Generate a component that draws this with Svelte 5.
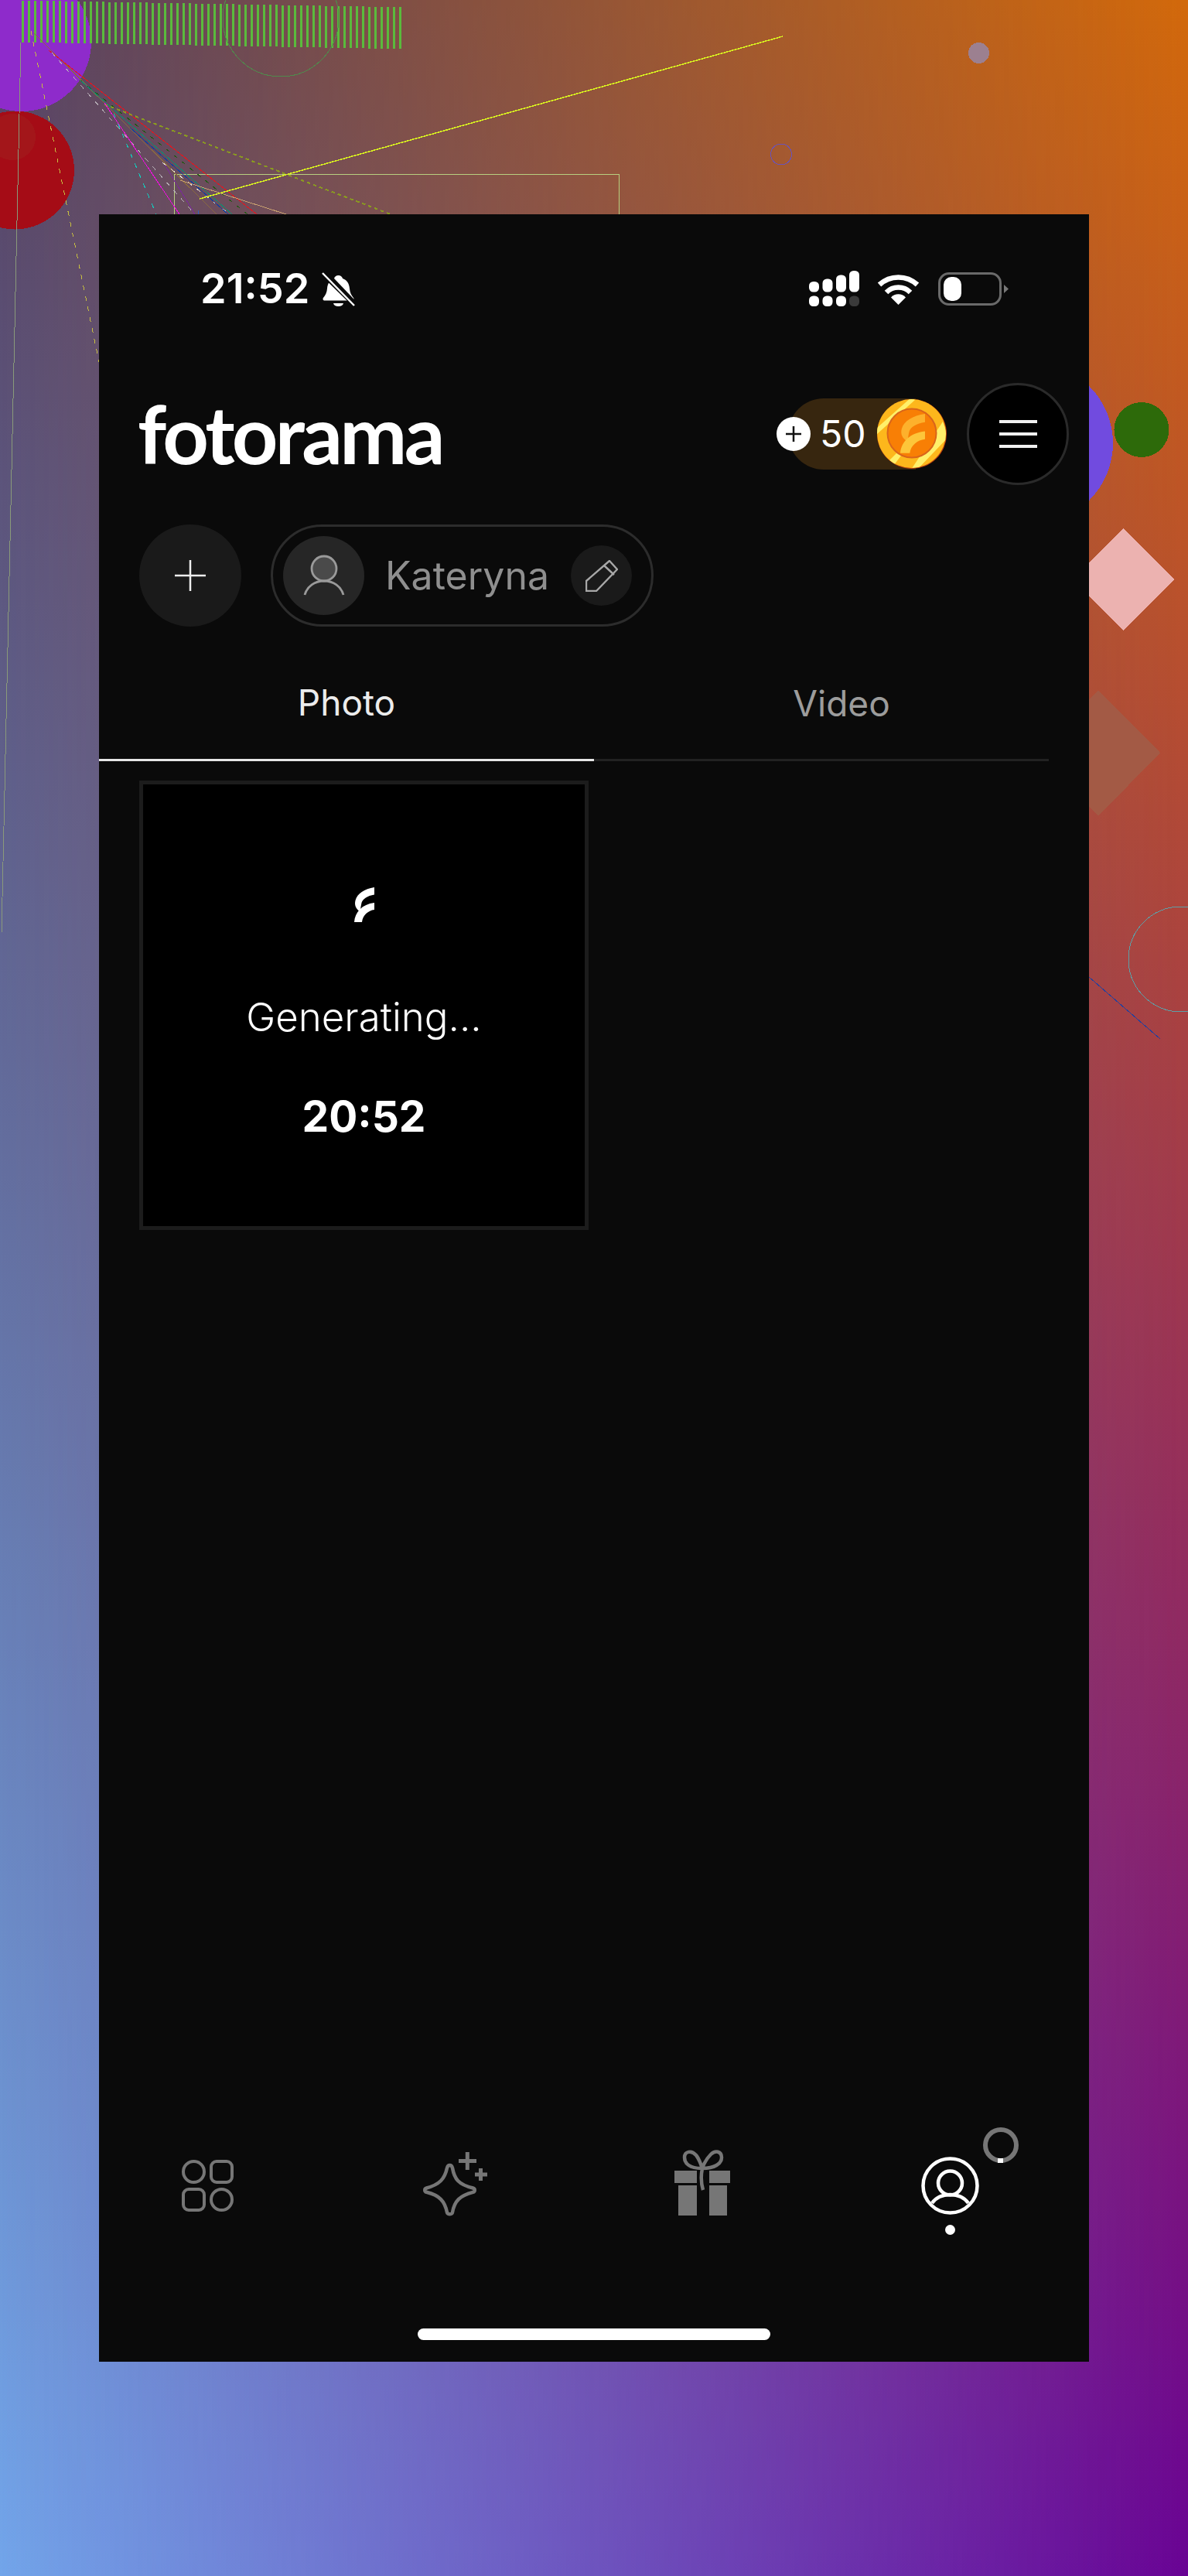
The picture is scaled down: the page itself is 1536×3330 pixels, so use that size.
<script lang="ts">
  // generative wallpaper behind the phone frame, in page pixels
  const bars = Array.from({ length: 62 }, (_, i) => ({
    x: 28 + i * 8,
    y: 1 + Math.floor(i / 7),
  }));

  const lines = [
    { x1: 43, y1: 42, x2: 280, y2: 277, c: "#8a6a40", w: 1 },
    { x1: 63, y1: 65, x2: 332, y2: 277, c: "#e8141c", w: 1 },
    { x1: 67, y1: 68, x2: 252, y2: 277, c: "#b8b0b8", w: 1, d: "6 8" },
    { x1: 210, y1: 210, x2: 297, y2: 277, c: "#e8e4d8", w: 1, d: "6 8" },
    { x1: 103, y1: 103, x2: 320, y2: 277, c: "#1c5a10", w: 1, d: "6 7" },
    { x1: 103, y1: 103, x2: 300, y2: 277, c: "#108a70", w: 1 },
    { x1: 168, y1: 165, x2: 295, y2: 277, c: "#1040a0", w: 1 },
    { x1: 135, y1: 135, x2: 505, y2: 277, c: "#8a9a20", w: 2, d: "4.500 4" },
    { x1: 135, y1: 133, x2: 232, y2: 277, c: "#f010e0", w: 1 },
    { x1: 147, y1: 147, x2: 202, y2: 277, c: "#10d0c0", w: 1, d: "6 8" },
    { x1: 213, y1: 213, x2: 252, y2: 277, c: "#7a2a9a", w: 1 },
    { x1: 40, y1: 40, x2: 128, y2: 468, c: "#c8c040", w: 1, d: "6 8" },
    { x1: 233, y1: 233, x2: 370, y2: 277, c: "#c8a070", w: 1 },
    { x1: 258, y1: 257, x2: 1012, y2: 47, c: "#d8f020", w: 1.5 },
    { x1: 256, y1: 272, x2: 256, y2: 277, c: "#3060c0", w: 1 },
    { x1: 27, y1: 55, x2: 2, y2: 1206, c: "#8a9a7a", w: 1 },
    { x1: 1408, y1: 1263, x2: 1500, y2: 1343, c: "#2040a0", w: 1 },
  ];
</script>

<div class="page">
  <div class="tint"></div>
  <svg class="wallpaper" viewBox="0 0 1536 3330" width="1536" height="3330" aria-hidden="true">
    <circle cx="28" cy="54" r="90" fill="#8e2bcb" />
    <circle cx="19.500" cy="220" r="76.500" fill="#a50c16" />
    <circle cx="16" cy="177" r="30" fill="#a3161a" />
    {#each bars as b}
      <rect x={b.x} y={b.y} width="3" height="54" fill="#5abb3c" />
    {/each}
    <circle cx="363" cy="24" r="75" fill="none" stroke="#4f8a4c" />
    <circle cx="1010" cy="199.500" r="13.500" fill="none" stroke="#6a52b8" />
    <circle cx="1265.500" cy="68.500" r="13.500" fill="#9c8090" />
    <rect x="225.500" y="225.500" width="574.500" height="60" fill="none" stroke="#b8d080" />
    {#each lines as l}
      <line
        x1={l.x1}
        y1={l.y1}
        x2={l.x2}
        y2={l.y2}
        stroke={l.c}
        stroke-width={l.w}
        stroke-dasharray={l.d}
      />
    {/each}
    <circle cx="1335" cy="573" r="104" fill="#714bdf" />
    <circle cx="1476" cy="555.500" r="35.500" fill="#2d6a0a" />
    <polygon points="1452,683 1518,749 1452,815 1386,749" fill="#ecb2b0" />
    <polygon points="1420,892 1500,973 1420,1055 1340,973" fill="#a35a45" />
    <circle cx="1527" cy="1240" r="68" fill="none" stroke="#5ca0a8" />
  </svg>

  <main class="phone">
    <div class="status">
      <div class="status-left">
        <span class="clock">21:52</span>
        <svg class="bell" viewBox="0 0 43 45" aria-hidden="true">
          <path d="M21.500 0c3 0 5 2 5.500 4 6 2 8.500 7 9 13 .4 5 2 8 5 12 1 1.500.5 3.500-2 3.500H4c-2.500 0-3-2-2-3.500 3-4 4.600-7 5-12 .5-6 3-11 9-13 .5-2 2.500-4 5.500-4z" fill="#fff" transform="translate(0 5)" />
          <path d="M15 41h13c-.5 2.500-3 4-6.500 4s-6-1.500-6.500-4z" fill="#fff" />
          <path d="M4 0l39 41" stroke="#0a0a0a" stroke-width="5" />
          <path d="M0 3l42 41" stroke="#0a0a0a" stroke-width="4" />
          <path d="M1 2l41 42" stroke="#fff" stroke-width="2.500" />
        </svg>
      </div>
      <div class="status-right">
        <svg class="signal" viewBox="0 0 65 46" aria-hidden="true">
          <rect x="0" y="14" width="13" height="13.500" rx="5.500" fill="#fff" />
          <rect x="17.500" y="10.500" width="13" height="17" rx="5.500" fill="#fff" />
          <rect x="35" y="5.500" width="13" height="22" rx="5.500" fill="#fff" />
          <rect x="52" y="0" width="13" height="27.500" rx="5.500" fill="#fff" />
          <rect x="0" y="32.500" width="13" height="13.500" rx="5.500" fill="#fff" />
          <rect x="17.500" y="32.500" width="13" height="13.500" rx="5.500" fill="#fff" />
          <rect x="35" y="32.500" width="13" height="13.500" rx="5.500" fill="#fff" />
          <rect x="52" y="32.500" width="13" height="13.500" rx="5.500" fill="#3a3a3a" />
        </svg>
        <svg class="wifi" viewBox="0 0 55 41" aria-hidden="true">
          <path d="M3 15a36 36 0 0 1 49 0" fill="none" stroke="#fff" stroke-width="6.500" />
          <path d="M12 25a22 22 0 0 1 31 0" fill="none" stroke="#fff" stroke-width="6.500" />
          <path d="M27.500 41L18 31.500a13 13 0 0 1 19 0z" fill="#fff" />
        </svg>
        <div class="battery"><span class="level"></span></div>
        <svg class="nub" viewBox="0 0 6 11" aria-hidden="true">
          <path d="M0 0l6 5.500L0 11z" fill="#777" />
        </svg>
      </div>
    </div>

    <header class="top">
      <span class="logo">fotorama</span>
      <div class="top-actions">
        <div class="credits">
          <span class="add-credit">
            <svg viewBox="0 0 24 24" width="24" height="24" aria-hidden="true">
              <path d="M12 2v20M2 12h20" stroke="#111" stroke-width="2.500" />
            </svg>
          </span>
          <span class="amount">50</span>
          <svg class="coin" viewBox="0 0 90 92" aria-hidden="true">
            <defs>
              <clipPath id="coin-edge"><circle cx="44.500" cy="45.500" r="44.500" /></clipPath>
            </defs>
            <circle cx="45" cy="46" r="45" fill="#b8400f" />
            <circle cx="44.500" cy="45.500" r="44.500" fill="#fdb71c" />
            <g clip-path="url(#coin-edge)" fill="#fff06a">
              <polygon points="0,38 45,-2 49,2 0,46" />
              <polygon points="85,30 92,50 52,92 44,92" />
              <polygon points="16,80 30,66 34,70 22,86" />
            </g>
            <circle cx="45" cy="45" r="31.500" fill="#f87f05" stroke="#d9651b" stroke-width="2" />
            <g transform="translate(30 20) scale(1.230 1.130)">
              <path d="M8 32C2 28 0 23 1.500 17 4 8 13 2 26 0v9.500C17 11 11 15 9.500 20c-1 4-1.500 8-1.500 12z" fill="#fdb12c" />
              <path d="M0 45c1-13 10-23 26-25v9c-8 1-15 7-16 16z" fill="#fdc63a" />
            </g>
          </svg>
        </div>
        <button class="menu" aria-label="Menu">
          <span></span><span></span><span></span>
        </button>
      </div>
    </header>

    <div class="profiles">
      <button class="new-profile" aria-label="Add profile">
        <svg viewBox="0 0 40 40" width="40" height="40" aria-hidden="true">
          <path d="M20 0v40M0 20h40" stroke="#eee" stroke-width="2.500" />
        </svg>
      </button>
      <div class="profile">
        <span class="avatar">
          <svg viewBox="0 0 60 60" width="60" height="60" aria-hidden="true">
            <circle cx="30" cy="21" r="16" fill="#4a4a4a" stroke="#9a9a9a" stroke-width="2.800" />
            <path d="M5 55c3-11 13-18 25-18s22 7 25 18" fill="none" stroke="#9a9a9a" stroke-width="2.800" />
          </svg>
        </span>
        <span class="name">Kateryna</span>
        <span class="edit">
          <svg viewBox="0 0 42 41" width="42" height="41" aria-hidden="true">
            <path d="M1 40V27L31 1l10 11-27 28zM24 7l13 12" fill="none" stroke="#a8a8a8" stroke-width="2.400" stroke-linejoin="round" />
          </svg>
        </span>
      </div>
    </div>

    <nav class="tabs">
      <button class="tab active">Photo</button>
      <button class="tab">Video</button>
    </nav>

    <section class="gallery">
      <article class="pending">
        <svg class="mark" viewBox="0 0 26 46" aria-hidden="true">
          <path d="M8 32C2 28 0 23 1.500 17 4 8 13 2 26 0v9.500C17 11 11 15 9.500 20c-1 4-1.500 8-1.500 12z" fill="#fff" />
          <path d="M0 45c1-13 10-23 26-25v9c-8 1-15 7-16 16z" fill="#fff" />
        </svg>
        <p class="label">Generating...</p>
        <p class="timer">20:52</p>
      </article>
    </section>

    <footer class="bottom">
      <nav class="bar">
        <span class="cell">
          <svg viewBox="0 0 67 67" width="67" height="67" aria-hidden="true">
            <g fill="none" stroke="#767676" stroke-width="4">
              <circle cx="15.500" cy="15.500" r="13.500" />
              <rect x="38" y="2" width="27" height="27" rx="7" />
              <rect x="2" y="38" width="27" height="27" rx="7" />
              <circle cx="51.500" cy="51.500" r="13.500" />
            </g>
          </svg>
        </span>
        <span class="cell raised">
          <svg viewBox="0 0 83 83" width="83" height="83" aria-hidden="true">
            <path d="M34.500 17c2 0 3 1.500 3.500 3.500C40.500 35 46 42 64.500 46.500c3 .8 3 4.500 0 5.300C48 56 40.500 63 38 78c-.5 3-6 3-7 0C28 63 21 56 4.500 51.800c-3-.8-3-4.500 0-5.300C21 42 28 35 31 20.500c.5-2 1.500-3.500 3.500-3.500z" fill="none" stroke="#767676" stroke-width="4.500" />
            <path d="M57.300 0v23M46 11.500h23M74.500 21v16M67 29h16" stroke="#767676" stroke-width="5" />
          </svg>
        </span>
        <span class="cell lifted">
          <svg viewBox="0 0 72 85" width="72" height="85" aria-hidden="true">
            <g fill="#767676">
              <rect x="0" y="27" width="29" height="16" />
              <rect x="45" y="27" width="27" height="16" />
              <rect x="5" y="46" width="24" height="39" />
              <rect x="45" y="46" width="23" height="39" />
            </g>
            <path d="M35 24C20 24 13 18 13 10 13 2 22 0 28 7c4 5 6 11 8 17 2-6 6-13 11-18 6-6 14-4 14 4 0 8-9 14-25 14-2 10-2 18 1 28" fill="none" stroke="#767676" stroke-width="4.500" />
          </svg>
        </span>
        <span class="cell">
          <span class="account">
            <svg viewBox="0 0 75 75" width="75" height="75" aria-hidden="true">
              <circle cx="37.500" cy="37.500" r="35" fill="none" stroke="#fff" stroke-width="4.500" />
              <circle cx="37.500" cy="34" r="15.500" fill="none" stroke="#fff" stroke-width="4.500" />
              <path d="M14 60c5-7 13-11 23.500-11S56 53 61 60" fill="none" stroke="#fff" stroke-width="4.500" />
            </svg>
            <span class="dot"></span>
            <span class="spinner"><i></i></span>
          </span>
        </span>
      </nav>
      <span class="home"></span>
    </footer>
  </main>
</div>

<style>
  :global(body) {
    margin: 0;
    background: #000;
  }

  .page {
    position: relative;
    width: 1536px;
    height: 3330px;
    overflow: hidden;
    padding-top: 277px;
    box-sizing: border-box;
    background: linear-gradient(180deg, #574262 0%, #72a5ea 100%);
    font-family: "Inter", "Noto Sans", sans-serif;
  }

  /* right-hand colours fade in across the page, gives the four corner blend */
  .tint {
    position: absolute;
    inset: 0;
    background: linear-gradient(180deg, #d2690b 0%, #690394 100%);
    mask-image: linear-gradient(90deg, transparent 0%, #000 100%);
    -webkit-mask-image: linear-gradient(90deg, transparent 0%, #000 100%);
  }

  .wallpaper {
    position: absolute;
    left: 0;
    top: 0;
    shape-rendering: crispEdges;
  }

  .phone {
    position: relative;
    margin-left: 128px;
    width: 1280px;
    height: 2776px;
    background: #0a0a0a;
    display: flex;
    flex-direction: column;
    color: #fff;
  }

  /* ── Status bar ── */
  .status {
    height: 192px;
    flex: none;
    display: flex;
    align-items: center;
    justify-content: space-between;
    padding: 0 104px 0 131px;
    box-sizing: border-box;
  }

  .status-left {
    display: flex;
    align-items: center;
    gap: 16px;
  }

  .clock {
    font-size: 54px;
    font-weight: 600;
    line-height: 1;
  }

  .bell {
    width: 43px;
    height: 45px;
  }

  .status-right {
    display: flex;
    align-items: center;
  }

  .signal {
    width: 65px;
    height: 46px;
  }

  .wifi {
    width: 55px;
    height: 41px;
    margin-left: 23px;
  }

  .battery {
    width: 82px;
    height: 43px;
    margin-left: 24px;
    border: 3px solid #6a6a6a;
    border-radius: 14px;
    box-sizing: border-box;
    padding: 3px 4px;
  }

  .level {
    display: block;
    width: 23px;
    height: 100%;
    background: #fff;
    border-radius: 10px;
  }

  .nub {
    width: 6px;
    height: 11px;
    margin-left: 3px;
  }

  /* ── Header ── */
  .top {
    height: 132px;
    flex: none;
    margin-top: 26px;
    display: flex;
    align-items: center;
    justify-content: space-between;
    padding: 0 26px 0 50px;
  }

  .logo {
    font-family: "Lato", "Noto Sans", sans-serif;
    font-size: 104px;
    font-weight: 700;
    letter-spacing: -3.700px;
    line-height: 1;
    margin-top: -2px;
  }

  .top-actions {
    display: flex;
    align-items: center;
    gap: 26px;
  }

  .credits {
    position: relative;
    display: flex;
    align-items: center;
    width: 220px;
    height: 92px;
  }

  .credits::before {
    content: "";
    position: absolute;
    left: 15px;
    right: 40px;
    top: 0;
    bottom: 0;
    background: #37260f;
    border-radius: 46px 0 0 46px;
  }

  .add-credit {
    position: relative;
    flex: none;
    width: 44px;
    height: 44px;
    border-radius: 50%;
    background: #fff;
    display: flex;
    align-items: center;
    justify-content: center;
  }

  .amount {
    position: relative;
    margin-left: 12px;
    font-size: 48px;
    line-height: 52px;
  }

  .coin {
    position: relative;
    margin-left: auto;
    width: 90px;
    height: 92px;
  }

  .menu {
    width: 132px;
    height: 132px;
    border-radius: 50%;
    background: #000;
    border: 3px solid #2a2a2a;
    display: flex;
    flex-direction: column;
    align-items: center;
    justify-content: center;
    gap: 12px;
    padding: 0;
    box-sizing: border-box;
  }

  .menu span {
    width: 49px;
    height: 4px;
    background: #f0f0f0;
  }

  /* ── Profile row ── */
  .profiles {
    display: flex;
    align-items: center;
    gap: 38px;
    padding-left: 52px;
    margin-top: 51px;
    flex: none;
  }

  .new-profile {
    width: 132px;
    height: 132px;
    border-radius: 50%;
    border: 0;
    padding: 0;
    background: #1a1a1a;
    display: flex;
    align-items: center;
    justify-content: center;
  }

  .profile {
    display: flex;
    align-items: center;
    width: 495px;
    height: 132px;
    border: 3px solid #2c2c2c;
    border-radius: 66px;
    box-sizing: border-box;
    padding: 0 25px 0 13px;
  }

  .avatar {
    width: 105px;
    height: 102px;
    flex: none;
    border-radius: 50%;
    background: #262626;
    display: flex;
    align-items: center;
    justify-content: center;
  }

  .name {
    margin-left: 27px;
    flex: 1;
    font-size: 50px;
    color: #8f8f8f;
  }

  .edit {
    width: 79px;
    height: 78px;
    flex: none;
    border-radius: 50%;
    background: #1a1a1a;
    display: flex;
    align-items: center;
    justify-content: center;
  }

  /* ── Tabs ── */
  .tabs {
    position: relative;
    flex: none;
    display: grid;
    grid-template-columns: 640px 640px;
    margin-top: 38px;
  }

  .tabs::after {
    content: "";
    position: absolute;
    left: 0;
    bottom: 0;
    width: 1228px;
    height: 3px;
    background: #222;
  }

  .tab {
    height: 136px;
    border: 0;
    background: none;
    font-family: inherit;
    font-size: 46px;
    color: #9c9c9c;
    padding: 0 0 14px;
  }

  .tab.active {
    color: #ececec;
    position: relative;
    z-index: 1;
    border-bottom: 3px solid #e6e6e6;
  }

  /* ── Gallery ── */
  .gallery {
    padding: 25px 0 0 52px;
    flex: 1;
    min-height: 0;
  }

  .pending {
    width: 581px;
    height: 581px;
    box-sizing: border-box;
    background: #000;
    border: 5px solid #1c1c1c;
    display: flex;
    flex-direction: column;
    align-items: center;
    text-align: center;
  }

  .mark {
    width: 26px;
    height: 46px;
    margin-top: 133px;
  }

  .label {
    margin: 92px 0 0;
    font-size: 51px;
    line-height: 60px;
    font-weight: 300;
  }

  .timer {
    margin: 66px 0 0;
    font-size: 55px;
    line-height: 64px;
    font-weight: 700;
  }

  /* ── Bottom nav ── */
  .bottom {
    height: 344px;
    flex: none;
    display: flex;
    flex-direction: column;
    align-items: center;
  }

  .bar {
    align-self: flex-start;
    display: grid;
    grid-template-columns: repeat(4, 320px);
    height: 232px;
    margin-left: -20px;
  }

  .cell {
    display: flex;
    align-items: center;
    justify-content: center;
  }

  .cell.raised {
    padding-bottom: 3px;
    box-sizing: border-box;
  }

  .cell.lifted {
    padding-bottom: 7px;
    box-sizing: border-box;
  }

  .account {
    position: relative;
    width: 75px;
    height: 75px;
  }

  .dot {
    position: absolute;
    left: 31px;
    top: 88px;
    width: 13px;
    height: 13px;
    border-radius: 50%;
    background: #fff;
  }

  .spinner {
    position: absolute;
    left: 80px;
    top: -38px;
    width: 46px;
    height: 46px;
    border-radius: 50%;
    border: 6px solid #767676;
    box-sizing: border-box;
  }

  .spinner i {
    position: absolute;
    left: 13px;
    bottom: -6px;
    width: 7px;
    height: 6px;
    background: #fff;
  }

  .home {
    margin-top: 69px;
    width: 456px;
    height: 15px;
    border-radius: 8px;
    background: #fff;
  }
</style>
